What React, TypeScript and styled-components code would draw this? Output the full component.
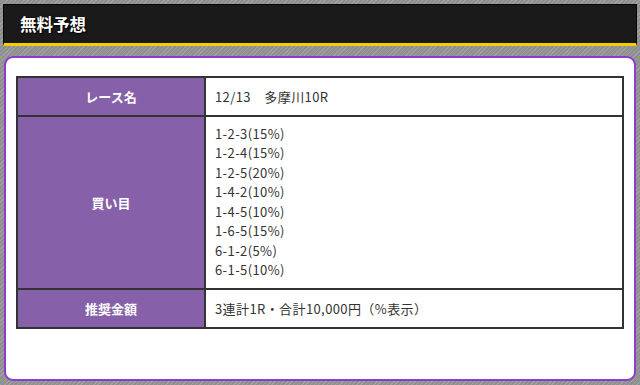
import styled, { createGlobalStyle } from 'styled-components'

const GlobalStyle = createGlobalStyle`
  html, body {
    margin: 0;
    padding: 0;
  }

  body {
    background-color: #8f8f8f;
    background-image: repeating-linear-gradient(
      -45deg,
      #8f8f8f 0px,
      #8f8f8f 2px,
      #a0a0a0 2px,
      #a0a0a0 3px
    );
    font-family: 'Noto Sans CJK JP', 'Noto Sans', sans-serif;
    color: #333333;
  }
`

const Page = styled.div`
  display: flex;
  flex-direction: column;
  gap: 10px;
  padding: 4px 3px 4px 3px;
`

const TitleBar = styled.div`
  display: flex;
  align-items: center;
  height: 38px;
  padding: 0 16px;
  background: #1a1a1a;
  border: 1px solid #050505;
  border-bottom: 3px solid #f5cd00;
`

const Title = styled.h2`
  margin: 0;
  font-size: 16.5px;
  font-weight: 700;
  color: #ffffff;
  text-shadow: 0 0 2px #000000, 1px 1px 1px #000000;
`

const Card = styled.div`
  margin: 0 1px;
  padding: 18px 10px 50px;
  background: #ffffff;
  border: 2px solid #8a3cd0;
  border-radius: 9px;
`

const Table = styled.table`
  width: 100%;
  border-collapse: collapse;
  border: 2px solid #333333;
`

const Head = styled.th<{ $h: number }>`
  width: 186px;
  height: ${({ $h }) => $h}px;
  padding: 0;
  background: #8660a8;
  border: 2px solid #333333;
  color: #ffffff;
  font-size: 13px;
  font-weight: 700;
  text-align: center;
  vertical-align: middle;
`

const Cell = styled.td`
  padding: 0 9px;
  border: 2px solid #333333;
  font-size: 13px;
  letter-spacing: 0.4px;
  vertical-align: middle;
`

const Picks = styled.ul`
  list-style: none;
  margin: 0;
  padding: 5px 0 7px;
  line-height: 19.5px;
`

const picks = [
  '1-2-3(15%)',
  '1-2-4(15%)',
  '1-2-5(20%)',
  '1-4-2(10%)',
  '1-4-5(10%)',
  '1-6-5(15%)',
  '6-1-2(5%)',
  '6-1-5(10%)',
]

const App = () => (
  <>
    <GlobalStyle />
    <Page>
      <TitleBar>
        <Title>無料予想</Title>
      </TitleBar>
      <Card>
        <Table>
          <tbody>
            <tr>
              <Head $h={37}>レース名</Head>
              <Cell>12/13　多摩川10R</Cell>
            </tr>
            <tr>
              <Head $h={171}>買い目</Head>
              <Cell>
                <Picks>
                  {picks.map((p) => (
                    <li key={p}>{p}</li>
                  ))}
                </Picks>
              </Cell>
            </tr>
            <tr>
              <Head $h={37}>推奨金額</Head>
              <Cell>3連計1R・合計10,000円（%表示）</Cell>
            </tr>
          </tbody>
        </Table>
      </Card>
    </Page>
  </>
)

export default App
